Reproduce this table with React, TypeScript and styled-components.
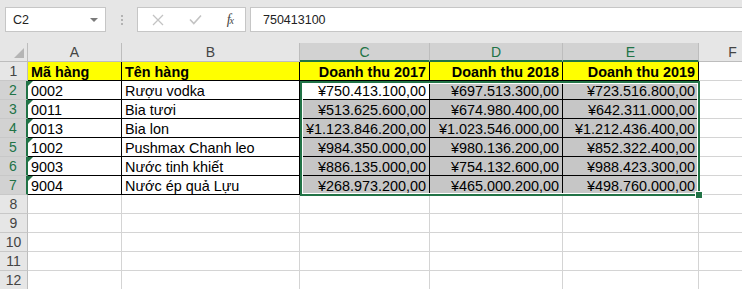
import { Fragment } from 'react';
import styled, { createGlobalStyle } from 'styled-components';

const GlobalStyle = createGlobalStyle`
  body {
    margin: 0;
    background: #ffffff;
    overflow: hidden;
  }
`;

const GREEN = '#217346';

const Frame = styled.div`
  width: 742px;
  height: 289px;
  overflow: hidden;
  display: flex;
  flex-direction: column;
  font-family: 'Liberation Sans', Arial, sans-serif;
`;

/* ---------- formula bar ---------- */

const TopBar = styled.div`
  height: 43px;
  flex: none;
  box-sizing: border-box;
  background: #e6e6e6;
  display: flex;
  align-items: flex-start;
  padding: 7px 0 0 5px;
`;

const Box = styled.div<{ $width?: number }>`
  box-sizing: border-box;
  height: 25px;
  background: #ffffff;
  border: 1px solid #c6c6c6;
  display: flex;
  align-items: center;
  ${(p) => (p.$width ? `width: ${p.$width}px; flex: none;` : 'flex: 1;')}
`;

const NameBox = styled(Box)`
  justify-content: space-between;
  padding: 0 7px 0 7px;
  font-size: 12.5px;
  color: #222;
`;

const Caret = styled.span`
  width: 0;
  height: 0;
  border-left: 4px solid transparent;
  border-right: 4px solid transparent;
  border-top: 4px solid #7a7a7a;
`;

const Grip = styled.div`
  width: 31px;
  height: 25px;
  flex: none;
  display: flex;
  flex-direction: column;
  align-items: center;
  justify-content: center;
  gap: 2px;

  & span {
    width: 2px;
    height: 2px;
    background: #b3b3b3;
  }
`;

const FxBox = styled(Box)`
  margin-right: 4px;
  padding: 0 12px 0 14px;
  justify-content: space-between;
`;

const FxLabel = styled.span`
  font-family: 'Liberation Serif', 'Times New Roman', serif;
  font-style: italic;
  font-size: 14px;
  color: #444;
  letter-spacing: -1px;

  & sub {
    font-size: 10px;
    vertical-align: 0;
  }
`;

const FormulaInput = styled(Box)`
  padding-left: 12px;
  font-size: 12.5px;
  color: #222;
  border-right: none;
`;

/* ---------- sheet grid ---------- */

const Sheet = styled.div`
  display: grid;
  grid-template-columns: 28px 94px 178px 130px 133px 136px 68px;
  grid-template-rows: repeat(13, 19px);
  background: #ffffff;
`;

type Spot = { $r: number; $c: number };

const at = (p: Spot) => `grid-row: ${p.$r}; grid-column: ${p.$c};`;

const Corner = styled.div`
  grid-row: 1;
  grid-column: 1;
  position: relative;
  box-sizing: border-box;
  background: #e6e6e6;
  border-right: 1px solid #bdbdbd;
  border-bottom: 1px solid #bdbdbd;

  &::after {
    content: '';
    position: absolute;
    right: 3px;
    bottom: 3px;
    width: 10px;
    height: 10px;
    background: #b5b5b5;
    clip-path: polygon(100% 0, 100% 100%, 0 100%);
  }
`;

const ColHead = styled.div<Spot & { $picked?: boolean }>`
  ${at}
  box-sizing: border-box;
  background: ${(p) => (p.$picked ? '#d2d2d2' : '#e6e6e6')};
  color: ${(p) => (p.$picked ? GREEN : '#444')};
  border-right: 1px solid #bdbdbd;
  border-bottom: ${(p) => (p.$picked ? `2px solid ${GREEN}` : '1px solid #bdbdbd')};
  font-size: 14px;
  line-height: 18px;
  text-align: center;
`;

const RowHead = styled.div<Spot & { $picked?: boolean }>`
  ${at}
  box-sizing: border-box;
  background: ${(p) => (p.$picked ? '#d2d2d2' : '#e6e6e6')};
  color: ${(p) => (p.$picked ? GREEN : '#444')};
  border-right: ${(p) => (p.$picked ? `2px solid ${GREEN}` : '1px solid #bdbdbd')};
  border-bottom: 1px solid #c8c8c8;
  font-size: 14px;
  line-height: 19px;
  text-align: center;
`;

const Cell = styled.div<
  Spot & {
    $align?: 'left' | 'right';
    $bold?: boolean;
    $fill?: string;
    $ruled?: boolean;
    $flag?: boolean;
  }
>`
  ${at}
  position: relative;
  box-sizing: border-box;
  min-width: 0;
  overflow: hidden;
  white-space: nowrap;
  padding: 2px 3px 0 3px;
  background: ${(p) => p.$fill ?? '#ffffff'};
  border-right: 1px solid ${(p) => (p.$ruled ? '#000' : '#d4d4d4')};
  border-bottom: 1px solid ${(p) => (p.$ruled ? '#000' : '#d4d4d4')};
  color: #000;
  font-size: 14.4px;
  font-weight: ${(p) => (p.$bold ? 700 : 400)};
  line-height: 16px;
  text-align: ${(p) => p.$align ?? 'left'};

  ${(p) =>
    p.$flag &&
    `&::before {
      content: '';
      position: absolute;
      left: 0;
      top: 0;
      border-top: 5px solid ${GREEN};
      border-right: 5px solid transparent;
    }`}
`;

/* selected range C2:E7 drawn over its cells */
const Selection = styled.div`
  grid-column: 4 / 7;
  grid-row: 3 / 9;
  position: relative;
  margin: 0 -1px -1px 0;
  border: 2px solid ${GREEN};
  box-shadow: inset 0 0 0 1px #ffffff;
  pointer-events: none;
`;

const FillHandle = styled.span`
  position: absolute;
  right: -5px;
  bottom: -5px;
  width: 6px;
  height: 6px;
  background: ${GREEN};
  border: 1px solid #ffffff;
`;

type Row = [string, string, string, string, string];

const rows: Row[] = [
  ['0002', 'Rượu vodka', '¥750.413.100,00', '¥697.513.300,00', '¥723.516.800,00'],
  ['0011', 'Bia tươi', '¥513.625.600,00', '¥674.980.400,00', '¥642.311.000,00'],
  ['0013', 'Bia lon', '¥1.123.846.200,00', '¥1.023.546.000,00', '¥1.212.436.400,00'],
  ['1002', 'Pushmax Chanh leo', '¥984.350.000,00', '¥980.136.200,00', '¥852.322.400,00'],
  ['9003', 'Nước tinh khiết', '¥886.135.000,00', '¥754.132.600,00', '¥988.423.300,00'],
  ['9004', 'Nước ép quả Lựu', '¥268.973.200,00', '¥465.000.200,00', '¥498.760.000,00'],
];

const columns = ['A', 'B', 'C', 'D', 'E', 'F'];
const headings = ['Mã hàng', 'Tên hàng', 'Doanh thu 2017', 'Doanh thu 2018', 'Doanh thu 2019'];

export default function App() {
  return (
    <Frame>
      <GlobalStyle />
      <TopBar>
        <NameBox $width={101}>
          <span>C2</span>
          <Caret />
        </NameBox>
        <Grip>
          <span />
          <span />
          <span />
        </Grip>
        <FxBox $width={109}>
          <svg width="12" height="12" viewBox="0 0 12 12">
            <path d="M1 1 L11 11 M11 1 L1 11" stroke="#c3c3c3" strokeWidth="1.3" fill="none" />
          </svg>
          <svg width="13" height="11" viewBox="0 0 13 11">
            <path d="M1 5.5 L4.8 9.5 L12 1.5" stroke="#c3c3c3" strokeWidth="1.6" fill="none" />
          </svg>
          <FxLabel>
            f<sub>x</sub>
          </FxLabel>
        </FxBox>
        <FormulaInput>750413100</FormulaInput>
      </TopBar>

      <Sheet>
        <Corner />
        {columns.map((c, i) => (
          <ColHead key={c} $r={1} $c={i + 2} $picked={i >= 2 && i <= 4}>
            {c}
          </ColHead>
        ))}

        <RowHead $r={2} $c={1}>
          1
        </RowHead>
        {headings.map((h, i) => (
          <Cell
            key={h}
            $r={2}
            $c={i + 2}
            $bold
            $ruled
            $fill="#ffff00"
            $align={i >= 2 ? 'right' : 'left'}
          >
            {h}
          </Cell>
        ))}
        <Cell $r={2} $c={7} />

        {rows.map((r, ri) => (
          <Fragment key={`row${ri}`}>
            <RowHead $r={ri + 3} $c={1} $picked>
              {ri + 2}
            </RowHead>
            {r.map((v, ci) => (
              <Cell
                key={ci}
                $r={ri + 3}
                $c={ci + 2}
                $ruled
                $flag={ci === 0}
                $align={ci >= 2 ? 'right' : 'left'}
                $fill={ci >= 2 && !(ri === 0 && ci === 2) ? '#c6c6c6' : '#ffffff'}
              >
                {v}
              </Cell>
            ))}
            <Cell $r={ri + 3} $c={7} />
          </Fragment>
        ))}

        {[8, 9, 10, 11, 12].map((n) => (
          <Fragment key={`row${n}`}>
            <RowHead $r={n + 1} $c={1}>
              {n}
            </RowHead>
            {columns.map((c, ci) => (
              <Cell key={c} $r={n + 1} $c={ci + 2} />
            ))}
          </Fragment>
        ))}

        <Selection>
          <FillHandle />
        </Selection>
      </Sheet>
    </Frame>
  );
}
